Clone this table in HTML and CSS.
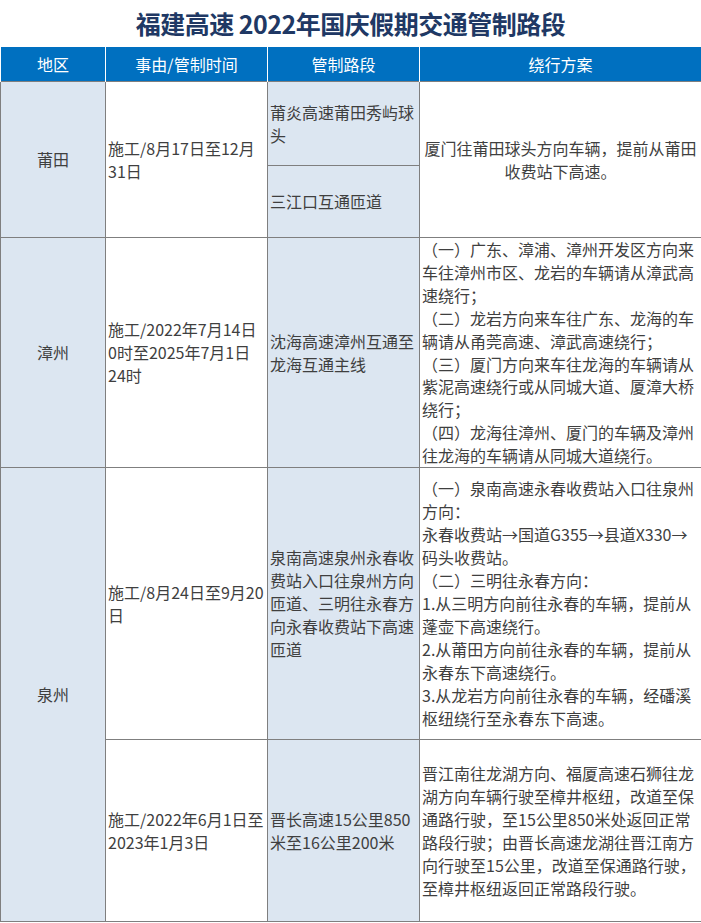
FILE: index.html
```html
<!DOCTYPE html>
<html lang="zh-CN">
<head>
<meta charset="utf-8">
<title>福建高速 2022年国庆假期交通管制路段</title>
<link rel="stylesheet" href="styles.css">
</head>
<body>
<div class="page">
  <h1 class="title">福建高速 2022年国庆假期交通管制路段</h1>
  <table class="grid">
    <colgroup>
      <col class="c1"><col class="c2"><col class="c3"><col class="c4">
    </colgroup>
    <thead>
      <tr class="head">
        <th>地区</th>
        <th>事由/管制时间</th>
        <th>管制路段</th>
        <th>绕行方案</th>
      </tr>
    </thead>
    <tbody>
      <tr class="r1a">
        <td class="region" rowspan="2">莆田</td>
        <td class="plain" rowspan="2">施工/8月17日至12月<br>31日</td>
        <td class="shade">莆炎高速莆田秀屿球<br>头</td>
        <td class="plain center" rowspan="2">厦门往莆田球头方向车辆，提前从莆田<br>收费站下高速。</td>
      </tr>
      <tr class="r1b">
        <td class="shade">三江口互通匝道</td>
      </tr>
      <tr class="r2">
        <td class="region">漳州</td>
        <td class="plain">施工/2022年7月14日<br>0时至2025年7月1日<br>24时</td>
        <td class="shade">沈海高速漳州互通至<br>龙海互通主线</td>
        <td class="plain tight">（一）广东、漳浦、漳州开发区方向来<br>车往漳州市区、龙岩的车辆请从漳武高<br>速绕行；<br>（二）龙岩方向来车往广东、龙海的车<br>辆请从甬莞高速、漳武高速绕行；<br>（三）厦门方向来车往龙海的车辆请从<br>紫泥高速绕行或从同城大道、厦漳大桥<br>绕行；<br>（四）龙海往漳州、厦门的车辆及漳州<br>往龙海的车辆请从同城大道绕行。</td>
      </tr>
      <tr class="r3a">
        <td class="region" rowspan="2">泉州</td>
        <td class="plain">施工/8月24日至9月20<br>日</td>
        <td class="shade">泉南高速泉州永春收<br>费站入口往泉州方向<br>匝道、三明往永春方<br>向永春收费站下高速<br>匝道</td>
        <td class="plain">（一）泉南高速永春收费站入口往泉州<br>方向：<br>永春收费站→国道G355→县道X330→<br>码头收费站。<br>（二）三明往永春方向：<br>1.从三明方向前往永春的车辆，提前从<br>蓬壶下高速绕行。<br>2.从莆田方向前往永春的车辆，提前从<br>永春东下高速绕行。<br>3.从龙岩方向前往永春的车辆，经磻溪<br>枢纽绕行至永春东下高速。</td>
      </tr>
      <tr class="r3b">
        <td class="plain">施工/2022年6月1日至<br>2023年1月3日</td>
        <td class="shade">晋长高速15公里850<br>米至16公里200米</td>
        <td class="plain">晋江南往龙湖方向、福厦高速石狮往龙<br>湖方向车辆行驶至樟井枢纽，改道至保<br>通路行驶，至15公里850米处返回正常<br>路段行驶；由晋长高速龙湖往晋江南方<br>向行驶至15公里，改道至保通路行驶，<br>至樟井枢纽返回正常路段行驶。</td>
      </tr>
    </tbody>
  </table>
</div>
</body>
</html>
```

FILE: styles.css
```css
html, body {
  margin: 0;
  padding: 0;
  background: #ffffff;
}

body {
  font-family: "Noto Sans CJK SC", "Noto Sans", sans-serif;
  color: #3f3f3f;
}

.page {
  width: 701px;
}

.title {
  margin: 0;
  height: 47px;
  line-height: 46px;
  text-align: center;
  font-size: 25px;
  font-weight: 700;
  color: #203864;
  letter-spacing: -0.5px;
}

.grid {
  width: 701px;
  border-collapse: collapse;
  table-layout: fixed;
  font-size: 16px;
  line-height: 23px;
}

.c1 { width: 105px; }
.c2 { width: 162px; }
.c3 { width: 152px; }
.c4 { width: 282px; }

.head th {
  height: 34px;
  padding: 0;
  background: #0070c0;
  color: #ffffff;
  font-weight: 400;
  text-align: center;
  border-left: 1px solid #ffffff;
  border-right: 1px solid #ffffff;
}

.grid td {
  border: 1px solid #7f7f7f;
  padding: 0 2px;
  vertical-align: middle;
  white-space: nowrap;
}

.region {
  background: #dce6f1;
  text-align: center;
}

.shade {
  background: #dce6f1;
}

.plain {
  background: #ffffff;
}

.center {
  text-align: center;
}

.r1a { height: 84px; }
.r1b { height: 72px; }
.r2 { height: 229px; }
.r3a { height: 272px; }
.r3b { height: 182px; }

.tight {
  line-height: 22.9px;
}
```
